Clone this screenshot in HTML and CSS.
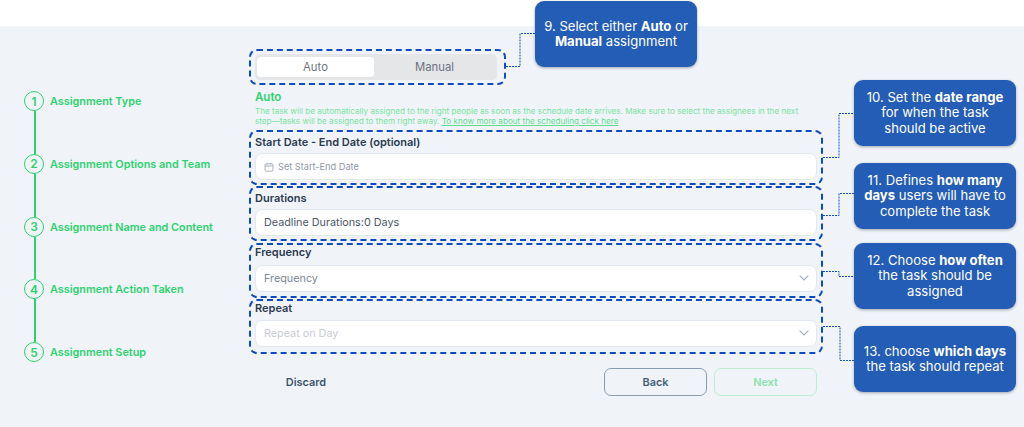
FILE: index.html
```html
<!DOCTYPE html>
<html lang="en">
<head>
<meta charset="utf-8">
<title>Assignment Setup</title>
<link rel="stylesheet" href="styles.css">
</head>
<body>
<div class="topbar"></div>
<div class="workspace">
  <nav class="stepper">
    <div class="step"><span class="step-num">1</span><span class="step-label">Assignment Type</span></div>
    <div class="step-line"></div>
    <div class="step"><span class="step-num">2</span><span class="step-label">Assignment Options and Team</span></div>
    <div class="step-line"></div>
    <div class="step"><span class="step-num">3</span><span class="step-label">Assignment Name and Content</span></div>
    <div class="step-line"></div>
    <div class="step"><span class="step-num">4</span><span class="step-label">Assignment Action Taken</span></div>
    <div class="step-line"></div>
    <div class="step"><span class="step-num">5</span><span class="step-label">Assignment Setup</span></div>
  </nav>
  <main class="form">
    <div class="mode-box">
      <div class="toggle">
        <span class="toggle-opt toggle-active">Auto</span>
        <span class="toggle-opt">Manual</span>
      </div>
    </div>
    <div class="mode-info">
      <h2 class="mode-title">Auto</h2>
      <p class="mode-desc">The task will be automatically assigned to the right people as soon as the schedule date arrives. Make sure to select the assignees in the next step—tasks will be assigned to them right away. <a class="mode-link" href="#">To know more about the scheduling click here</a></p>
    </div>
    <div class="groups">
      <section class="group group-dates">
        <label class="group-label">Start Date - End Date (optional)</label>
        <div class="input">
          <svg class="cal" viewBox="0 0 10 10" width="10" height="10" aria-hidden="true"><rect x="1" y="1.8" width="8" height="7.4" rx="1.2" fill="none" stroke="#a3acb9" stroke-width="0.9"/><path d="M1 4h8M3.2.8v1.8M6.8.8v1.8" fill="none" stroke="#a3acb9" stroke-width="0.9"/></svg>
          <span class="ph-date">Set Start-End Date</span>
        </div>
      </section>
      <section class="group group-durations">
        <label class="group-label">Durations</label>
        <div class="input"><span class="val">Deadline Durations:0 Days</span></div>
      </section>
      <section class="group group-frequency">
        <label class="group-label">Frequency</label>
        <div class="input"><span class="ph-freq">Frequency</span>
          <svg class="chev" viewBox="0 0 10 6" width="10" height="6" aria-hidden="true"><path d="M.7.7 5 5l4.3-4.3" fill="none" stroke="#a3acb9" stroke-width="1.1"/></svg>
        </div>
      </section>
      <section class="group group-repeat">
        <label class="group-label">Repeat</label>
        <div class="input"><span class="ph-repeat">Repeat on Day</span>
          <svg class="chev" viewBox="0 0 10 6" width="10" height="6" aria-hidden="true"><path d="M.7.7 5 5l4.3-4.3" fill="none" stroke="#a3acb9" stroke-width="1.1"/></svg>
        </div>
      </section>
    </div>
    <div class="actions">
      <button class="btn btn-discard">Discard</button>
      <div class="actions-right">
        <button class="btn btn-back">Back</button>
        <button class="btn btn-next">Next</button>
      </div>
    </div>
  </main>
</div>

<svg class="connectors" width="1024" height="427" viewBox="0 0 1024 427" aria-hidden="true">
  <path d="M506 66.5H520V33.5H535M823 157.5H839V113.5H854M823 215.5H839V193.5H854M823 271.5H839V276.5H854M823 326.5H840V360.5H854" fill="none" stroke="#1450c4" stroke-width="1" stroke-dasharray="2 1"/>
</svg>

<div class="callout c9"><span>9. Select either <b>Auto</b> or<br><b>Manual</b> assignment</span></div>
<div class="callout c10"><span>10. Set the <b>date range</b><br>for when the task<br>should be active</span></div>
<div class="callout c11"><span>11. Defines <b>how many</b><br><b>days</b> users will have to<br>complete the task</span></div>
<div class="callout c12"><span>12. Choose <b>how often</b><br>the task should be<br>assigned</span></div>
<div class="callout c13"><span>13. choose <b>which days</b><br>the task should repeat</span></div>
</body>
</html>
```
FILE: styles.css
```css
* { box-sizing: border-box; }
html, body { margin: 0; height: 100%; }
body {
  position: relative;
  width: 1024px;
  height: 427px;
  overflow: hidden;
  background: #f0f4f9;
  font-family: Inter, "Liberation Sans", sans-serif;
}
.topbar {
  height: 27px;
  background: #fff;
  border-bottom: 1px solid #f5f6f8;
}
.workspace {
  display: flex;
  align-items: flex-start;
}

/* stepper */
.stepper {
  width: 249px;
  flex: none;
  padding: 64px 0 0 24px;
  display: flex;
  flex-direction: column;
}
.step {
  display: flex;
  align-items: center;
  gap: 6px;
  height: 20px;
}
.step-num {
  width: 20px;
  height: 20px;
  flex: none;
  border: 1.5px solid #2fd16f;
  border-radius: 50%;
  display: flex;
  align-items: center;
  justify-content: center;
  font-size: 12px;
  font-weight: 600;
  color: #2fd16f;
  background: #f0f4f9;
}
.step-label {
  font-size: 10.85px;
  font-weight: 600;
  color: #2fd16f;
  white-space: nowrap;
}
.step-line {
  width: 2px;
  height: 42.75px;
  margin-left: 9.5px;
  background: #2fd16f;
}

/* form */
.form {
  width: 574px;
  flex: none;
  padding-top: 22px;
  display: flex;
  flex-direction: column;
}
.mode-box {
  width: 257px;
  height: 36px;
  border: 2px dashed #0f4bc0;
  border-radius: 8px;
  padding: 3px 7px 0 4px;
}
.toggle {
  display: flex;
  height: 26px;
  padding: 3px 2px;
  border-radius: 5px;
  background: #e4e6e8;
}
.toggle-opt {
  flex: 1;
  display: flex;
  align-items: center;
  justify-content: center;
  font-size: 11.3px;
  color: #6d7480;
  border-radius: 4px;
}
.toggle-active { flex: 0 0 117px; background: #fff; }
.mode-info {
  height: 45px;
  padding: 5px 0 0 6px;
}
.mode-title {
  margin: 0;
  font-size: 11.5px;
  line-height: 14px;
  font-weight: 600;
  color: #2fd16f;
}
.mode-desc {
  margin: 2px 0 0;
  width: 556px;
  font-size: 8.15px;
  line-height: 10px;
  color: #7ae2a2;
}
.mode-link { color: #5fdc90; text-decoration: underline; }

.groups {
  display: flex;
  flex-direction: column;
  gap: 1.33px;
}
.group {
  height: 55px;
  border: 2px dashed #0f4bc0;
  border-radius: 8px;
  padding: 3px 4px 0;
}
.group-label {
  display: block;
  height: 14px;
  margin-bottom: 4px;
  font-size: 11px;
  line-height: 14px;
  font-weight: 600;
  color: #2c3a50;
}
.group-frequency { padding-top: 0.33px; }
.group-frequency .group-label { margin-bottom: 6px; }
.group-repeat { padding-top: 0; }
.group-repeat .group-label { margin-bottom: 5px; }
.input {
  height: 27px;
  display: flex;
  align-items: center;
  padding: 0 8px;
  background: #fff;
  border: 1px solid #e3e8f0;
  border-radius: 7px;
}
.cal { margin-right: 4px; flex: none; }
.ph-date { font-size: 9.2px; color: #8f98a6; }
.val { font-size: 10.8px; color: #4c5666; }
.ph-freq { font-size: 10.8px; color: #7c8696; }
.ph-repeat { font-size: 10.8px; color: #c9ccd2; }
.chev { margin-left: auto; margin-right: -1px; }

.actions {
  display: flex;
  justify-content: space-between;
  padding: 0 6px;
  margin-top: 14px;
}
.actions-right { display: flex; gap: 7px; }
.btn {
  width: 103px;
  height: 28px;
  border-radius: 7px;
  background: transparent;
  border: 1.5px solid transparent;
  font: 600 10.9px Inter, "Liberation Sans", sans-serif;
  padding: 0;
}
.btn-discard { color: #3e546b; width: 102px; }
.btn-back { border-color: #8a9db0; color: #4a5f74; }
.btn-next { border-color: #bdecd0; color: #8ae3ad; }

/* annotations over the page */
.connectors {
  position: absolute;
  left: 0;
  top: 0;
  pointer-events: none;
}
.callout {
  position: absolute;
  width: 162px;
  height: 66px;
  left: 854px;
  display: flex;
  align-items: center;
  justify-content: center;
  text-align: center;
  background: #245db5;
  border-radius: 9px;
  box-shadow: 0 1px 3px rgba(40, 50, 70, .4);
  color: #fff;
  font-size: 13.1px;
  line-height: 15.3px;
}
.callout b { font-weight: 700; }
.c9 { left: 535px; top: 1px; }
.c10 { top: 80px; }
.c11 { top: 163px; }
.c12 { top: 243px; }
.c13 { top: 326px; }
```
